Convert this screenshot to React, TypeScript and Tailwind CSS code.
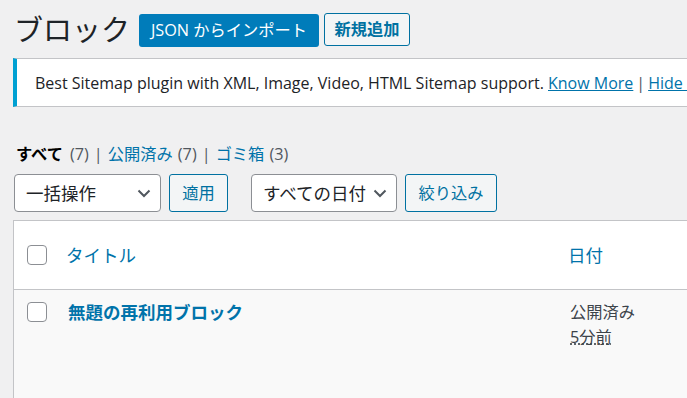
import React from "react";

const font = "font-['Open_Sans','Noto_Sans_CJK_JP',sans-serif]";

function Chevron() {
  return (
    <svg width="14" height="9" viewBox="0 0 14 9" className="shrink-0">
      <path d="M1.5 1.5l5.5 5.5 5.5-5.5" fill="none" stroke="#50575e" strokeWidth="2" />
    </svg>
  );
}

function Checkbox() {
  return (
    <div className="h-5 w-5 shrink-0 rounded-[4px] border border-[#8c8f94] bg-white" />
  );
}

export default function App() {
  return (
    <div className={`${font} h-[398px] w-[687px] overflow-hidden bg-[#f0f0f1] text-[#1d2327]`}>
      <div className="w-[960px] pl-[13px] pt-[13px]">
        {/* Header */}
        <div className="flex items-center">
          <h1 className="whitespace-nowrap text-[29px] leading-[34px] font-normal pl-[1px] mr-[9px]">ブロック</h1>
          <button className="h-[33px] w-[180px] rounded-[3px] bg-[#007cba] text-[16.25px] text-white leading-none">
            JSON からインポート
          </button>
          <button className="ml-[5px] -mt-[2px] h-[33px] w-[86px] rounded-[3px] border border-[#0071a1] bg-[#f3f5f6] text-[16.25px] font-semibold text-[#0071a1] leading-none">
            新規追加
          </button>
        </div>

        {/* Notice */}
        <div className="mt-[11px] flex h-[49px] items-center border border-l-4 border-[#c3c4c7] border-l-[#00a0d2] bg-white pl-[18px] text-[16px]">
          <p className="whitespace-nowrap">
            Best Sitemap plugin with XML, Image, Video, HTML Sitemap support.{" "}
            <a className="text-[#0073aa] underline">Know More</a>
            <span className="mx-[3px] text-[#50575e]">|</span>
            <a className="text-[#0073aa] underline">Hide Notice</a>
          </p>
        </div>

        {/* Views */}
        <div className="mt-[36px] flex items-center pl-[3px] text-[16.25px] leading-[22px] whitespace-nowrap">
          <span className="font-bold text-black">すべて</span>
          <span className="ml-[7px] text-[#50575e]">(7)</span>
          <span className="mx-[5px] text-[#50575e]">|</span>
          <span className="text-[#0073aa]">公開済み</span>
          <span className="ml-[5px] text-[#50575e]">(7)</span>
          <span className="mx-[5px] text-[#50575e]">|</span>
          <span className="text-[#0073aa]">ゴミ箱</span>
          <span className="ml-[5px] text-[#50575e]">(3)</span>
        </div>

        {/* Tablenav */}
        <div className="mt-[9px] flex items-center pl-[1px]">
          <div className="flex h-[38px] w-[147px] items-center justify-between rounded-[4px] border border-[#8c8f94] bg-white pl-[11px] pr-[9px] text-[17.5px]">
            <span>一括操作</span>
            <Chevron />
          </div>
          <button className="ml-[8px] h-[38px] w-[59px] rounded-[3px] border border-[#0071a1] bg-[#f3f5f6] text-[16.25px] text-[#0071a1]">
            適用
          </button>
          <div className="ml-[23px] flex h-[38px] w-[146px] items-center justify-between rounded-[4px] border border-[#8c8f94] bg-white pl-[11px] pr-[9px] text-[17.5px]">
            <span>すべての日付</span>
            <Chevron />
          </div>
          <button className="ml-[8px] h-[38px] w-[92px] rounded-[3px] border border-[#0071a1] bg-[#f3f5f6] text-[16.25px] text-[#0071a1]">
            絞り込み
          </button>
        </div>

        {/* Table */}
        <div className="mt-[8px] border border-[#c3c4c7] bg-[#f9f9f9]">
          <div className="flex h-[69px] items-center border-b border-[#c3c4c7] bg-white">
            <div className="w-[52px] pl-[13px]">
              <Checkbox />
            </div>
            <div className="w-[502px] text-[17.5px] text-[#0073aa]">タイトル</div>
            <div className="text-[17.5px] text-[#0073aa]">日付</div>
          </div>
          <div className="flex h-[200px] pt-[12px]">
            <div className="w-[52px] pl-[13px]">
              <Checkbox />
            </div>
            <div className="w-[502px] pl-[2px] text-[17.5px] font-bold leading-[20px] text-[#0073aa]">
              無題の再利用ブロック
            </div>
            <div className="-mt-[2px] pl-[2px] text-[16.25px] leading-[25px] text-[#3c434a]">
              <div>公開済み</div>
              <div>
                <abbr className="underline decoration-dotted">5分前</abbr>
              </div>
            </div>
          </div>
        </div>
      </div>
    </div>
  );
}
